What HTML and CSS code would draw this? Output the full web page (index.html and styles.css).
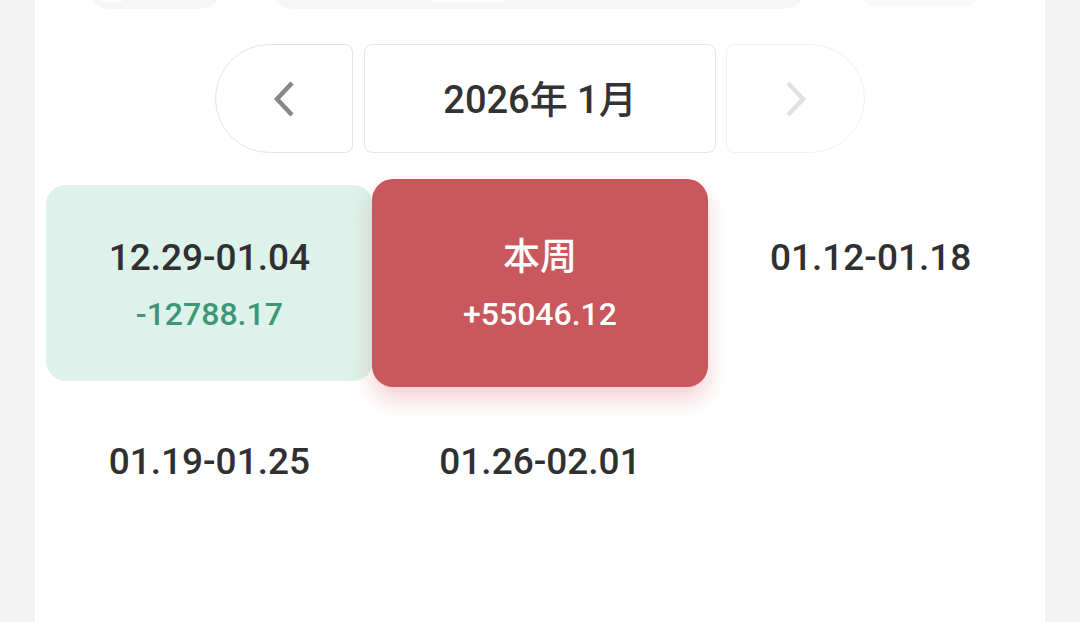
FILE: index.html
```html
<!DOCTYPE html>
<html lang="zh-CN">
<head>
<meta charset="utf-8">
<title>周收益</title>
<link rel="stylesheet" href="styles.css">
</head>
<body>
<div class="panel">
  <div class="tabs">
    <div class="pill pill-a"><span class="pill-inner inner-a"></span></div>
    <div class="pill pill-b"><span class="pill-inner inner-b"></span></div>
    <div class="pill pill-c"></div>
  </div>

  <div class="month-row">
    <button class="nav nav-prev" type="button" aria-label="上一月">
      <svg width="24" height="36" viewBox="0 0 24 36"><polyline points="20,2 5,18 20,34" fill="none" stroke="#888888" stroke-width="4.5" stroke-linecap="butt" stroke-linejoin="miter"/></svg>
    </button>
    <div class="month-label">2026年 1月</div>
    <button class="nav nav-next" type="button" aria-label="下一月">
      <svg width="24" height="36" viewBox="0 0 24 36"><polyline points="4,2 19,18 4,34" fill="none" stroke="#e0e0e0" stroke-width="4.5" stroke-linecap="butt" stroke-linejoin="miter"/></svg>
    </button>
  </div>

  <div class="weeks">
    <div class="week week-loss">
      <div class="week-date">12.29-01.04</div>
      <div class="week-amount amount-loss">-12788.17</div>
    </div>
    <div class="week week-current">
      <div class="week-date week-title">本周</div>
      <div class="week-amount">+55046.12</div>
    </div>
    <div class="week">
      <div class="week-date">01.12-01.18</div>
    </div>
    <div class="week">
      <div class="week-date">01.19-01.25</div>
    </div>
    <div class="week">
      <div class="week-date">01.26-02.01</div>
    </div>
  </div>
</div>
</body>
</html>
```

FILE: styles.css
```css
* { box-sizing: border-box; }

html, body {
  margin: 0;
  padding: 0;
  height: 100%;
}

body {
  background: #f4f4f4;
  font-family: Roboto, "Noto Sans CJK SC", sans-serif;
  color: #333333;
}

.panel {
  margin: 0 35px;
  height: 622px;
  background: #ffffff;
  overflow: hidden;
  padding: 0 11px;
}

/* cut-off tab row at the top */
.tabs {
  display: flex;
  height: 48px;
  margin-top: -39px;
  padding-left: 41px;
}

.pill {
  height: 48px;
  border-radius: 24px;
  background: #f6f6f6;
  display: flex;
  align-items: flex-end;
  padding-bottom: 6px;
}

.pill-a { width: 136px; }
.pill-b { width: 537px; margin-left: 47px; }
.pill-c { width: 127px; margin-left: 49px; height: 46px; background: #fafafa; }

.pill-inner {
  display: block;
  height: 30px;
  border-radius: 15px;
  background: #fdfdfd;
}

.inner-a { width: 37px; margin-left: 6px; }
.inner-b { width: 90px; margin-left: 153px; }

/* month selector */
.month-row {
  display: flex;
  justify-content: center;
  gap: 11px;
  margin-top: 35px;
}

.nav {
  width: 138px;
  height: 109px;
  padding: 0;
  background: #ffffff;
  display: flex;
  align-items: center;
  justify-content: center;
  cursor: pointer;
}

.nav-prev {
  border: 1px solid #e4e4e4;
  border-radius: 55px 8px 8px 55px;
}

.nav-next {
  width: 139px;
  border: 1px solid #f1f1f1;
  border-radius: 8px 55px 55px 8px;
  margin-left: -1px;
}

.month-label {
  width: 352px;
  height: 109px;
  border: 1px solid #e6e6e6;
  border-radius: 8px;
  display: flex;
  align-items: center;
  justify-content: center;
  padding-bottom: 5px;
  font-size: 38px;
  font-weight: 500;
  color: #333333;
}

/* week grid */
.weeks {
  display: grid;
  grid-template-columns: repeat(3, 1fr);
  grid-auto-rows: 196px;
  column-gap: 4px;
  row-gap: 8px;
  margin-top: 32px;
}

.week {
  border-radius: 20px;
  display: flex;
  flex-direction: column;
  align-items: center;
  padding-top: 50px;
}

.week-date {
  font-size: 37px;
  line-height: 46px;
  font-weight: 500;
  color: #303030;
}

.week-amount {
  margin-top: 14px;
  font-size: 32px;
  line-height: 38px;
  font-weight: 500;
}

.week-loss {
  background: #dcf2ea;
}

.amount-loss {
  color: #3e9676;
}

.week-current {
  background: #c8585d;
  margin: -6px -5px;
  padding-top: 56px;
  border-radius: 21px;
  box-shadow: 0 12px 22px rgba(214, 86, 96, 0.28);
  color: #ffffff;
}

.week-current .week-date,
.week-current .week-amount {
  color: #ffffff;
}

.week-title {
  font-family: "Noto Sans CJK SC", sans-serif;
  font-size: 37px;
  margin-top: -4px;
  margin-bottom: 4px;
}
```
